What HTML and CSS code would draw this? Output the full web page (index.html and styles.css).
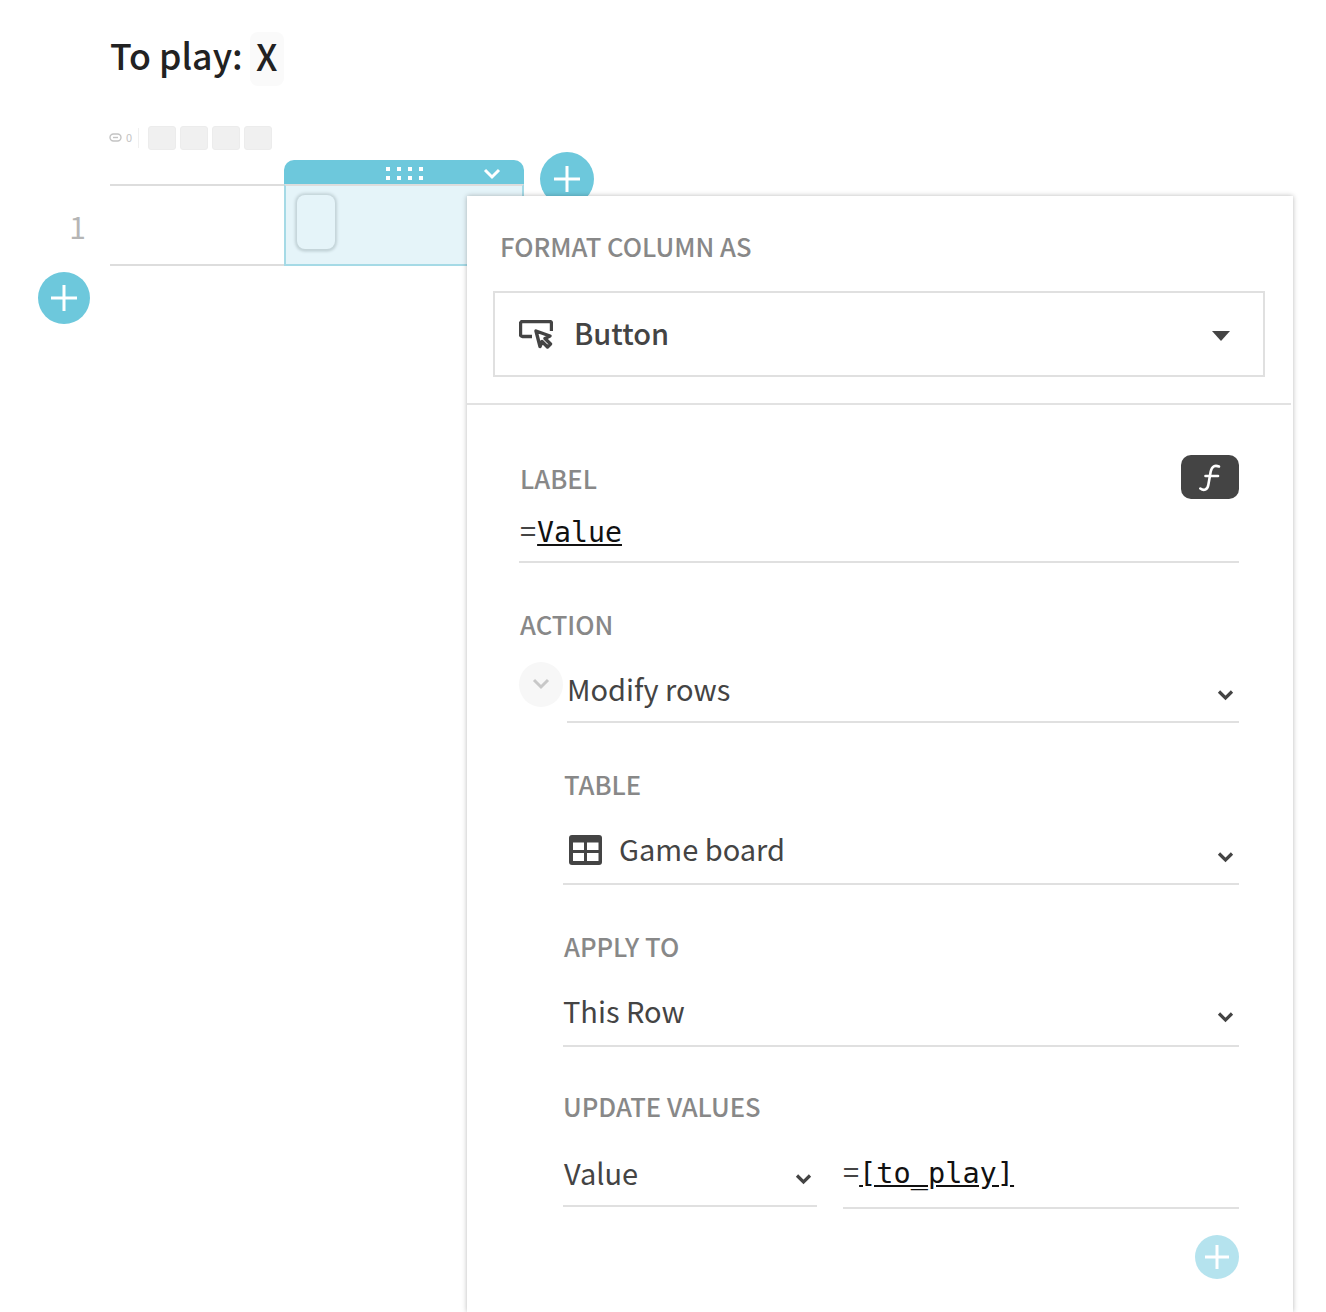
FILE: index.html
```html
<!DOCTYPE html>
<html lang="en">
<head>
    <meta charset="UTF-8">
    <meta name="viewport" content="width=device-width, initial-scale=1.0">
    <title>Format column</title>
    <link rel="stylesheet" href="styles.css">
</head>
<body>
    <header class="title">
        <h1>To play:</h1>
        <span class="title-chip">X</span>
    </header>

    <div class="toolbar">
        <svg class="link-icon" width="13" height="9" viewBox="0 0 13 9"><rect x="1" y="1" width="11" height="7" rx="3.5" fill="none" stroke="#c4c4c4" stroke-width="1.4"/><path d="M4 4.5h5" stroke="#c4c4c4" stroke-width="1.4"/></svg>
        <span class="link-count">0</span>
        <span class="toolbar-sep"></span>
        <span class="swatch"></span>
        <span class="swatch"></span>
        <span class="swatch"></span>
        <span class="swatch"></span>
    </div>

    <div class="sheet">
        <div class="col-head">
            <svg class="col-grip" width="38" height="13" viewBox="0 0 38 13" fill="#fff">
                <rect x="0" y="0" width="4" height="4"/><rect x="11" y="0" width="4" height="4"/><rect x="22" y="0" width="4" height="4"/><rect x="33" y="0" width="4" height="4"/>
                <rect x="0" y="9" width="4" height="4"/><rect x="11" y="9" width="4" height="4"/><rect x="22" y="9" width="4" height="4"/><rect x="33" y="9" width="4" height="4"/>
            </svg>
            <svg class="col-chevron" width="18" height="12" viewBox="0 0 18 12"><path d="M2 2l7 7 7-7" fill="none" stroke="#fff" stroke-width="3"/></svg>
        </div>
        <button class="round-add add-col"><svg width="30" height="30" viewBox="0 0 30 30"><path d="M15 2v26M2 15h26" stroke="#fff" stroke-width="3"/></svg></button>
        <div class="row-num">1</div>
        <div class="cell"></div>
        <div class="cell cell-selected"><span class="cell-button"></span></div>
        <button class="round-add add-row"><svg width="28" height="28" viewBox="0 0 28 28"><path d="M14 1v26M1 14h26" stroke="#fff" stroke-width="3"/></svg></button>
    </div>

    <aside class="panel">
        <div class="panel-head">
            <div class="label">FORMAT COLUMN AS</div>
            <div class="type-select">
                <svg class="type-icon" width="34" height="29" viewBox="0 0 34 29" fill="none" stroke="#444" stroke-width="3.4" stroke-linejoin="round">
                    <path d="M13 16.500H3.500a2 2 0 0 1-2-2V3.500a2 2 0 0 1 2-2h27a2 2 0 0 1 2 2V11"/>
                    <path d="M17 11l14 5-5 2.500 5.500 5.500-3 3-5.500-5.500-2 5z"/>
                </svg>
                <span class="type-name">Button</span>
                <span class="caret"></span>
            </div>
        </div>

        <div class="panel-body">
            <div class="label-row">
                <div class="label">LABEL</div>
                <button class="fx-button">
                    <svg width="58" height="44" viewBox="0 0 58 44" fill="none" stroke="#fff" stroke-width="2.6" stroke-linecap="round"><path d="M38 11.500c-4-1.500-7-.5-8.300 5L27.300 30c-.8 5-4.500 6-8 3.500"/><path d="M24.500 21H37"/></svg>
                </button>
            </div>
            <div class="formula label-formula">=<code>Value</code></div>

            <div class="label action-label">ACTION</div>
            <div class="action-row">
                <span class="collapse">
                    <svg width="18" height="12" viewBox="0 0 18 12"><path d="M2 2l7 7 7-7" fill="none" stroke="#c8c8c8" stroke-width="3"/></svg>
                </span>
                <div class="select action-select">
                    <span>Modify rows</span>
                    <svg class="chevron" width="17" height="12" viewBox="0 0 17 12"><path d="M2 2.500l6.500 6.500 6.500-6.500" fill="none" stroke="#444" stroke-width="3.200"/></svg>
                </div>
            </div>

            <div class="action-fields">
                <div class="label table-label">TABLE</div>
                <div class="select">
                    <svg class="table-icon" width="33" height="30" viewBox="0 0 33 30">
                        <rect width="33" height="30" rx="3" fill="#444"/>
                        <rect x="4" y="7.500" width="11" height="7.500" fill="#fff"/><rect x="18" y="7.500" width="11.500" height="7.500" fill="#fff"/>
                        <rect x="4" y="18" width="11" height="8" fill="#fff"/><rect x="18" y="18" width="11.500" height="8" fill="#fff"/>
                    </svg>
                    <span>Game board</span>
                    <svg class="chevron" width="17" height="12" viewBox="0 0 17 12"><path d="M2 2.500l6.500 6.500 6.500-6.500" fill="none" stroke="#444" stroke-width="3.200"/></svg>
                </div>

                <div class="label field-label">APPLY TO</div>
                <div class="select apply-select">
                    <span>This Row</span>
                    <svg class="chevron" width="17" height="12" viewBox="0 0 17 12"><path d="M2 2.500l6.500 6.500 6.500-6.500" fill="none" stroke="#444" stroke-width="3.200"/></svg>
                </div>

                <div class="label update-label">UPDATE VALUES</div>
                <div class="update-row">
                    <div class="select value-select">
                        <span>Value</span>
                        <svg class="chevron" width="17" height="12" viewBox="0 0 17 12"><path d="M2 2.500l6.500 6.500 6.500-6.500" fill="none" stroke="#444" stroke-width="3.200"/></svg>
                    </div>
                    <div class="formula value-formula">=<code>[to_play]</code></div>
                </div>

                <div class="add-value">
                    <button class="round-add small-add"><svg width="26" height="26" viewBox="0 0 26 26"><path d="M13 1v24M1 13h24" stroke="#fff" stroke-width="3"/></svg></button>
                </div>
            </div>
        </div>
    </aside>
</body>
</html>
```

FILE: styles.css
```css
/* Sheet with the column format panel open */
body {
    margin: 0;
    height: 1312px;
    overflow: hidden;
    position: relative;
    background-color: #fff;
    color: #444;
    font-family: "Noto Sans CJK SC", "Noto Sans", sans-serif;
}

button {
    padding: 0;
    border: none;
    cursor: pointer;
}

.title {
    display: flex;
    align-items: center;
    gap: 7px;
    height: 54px;
    padding: 32px 0 0 110px;
    color: #222;
}

h1 {
    margin: 0;
    padding-bottom: 8px;
    font-size: 35.700px;
    font-weight: 500;
    line-height: 46px;
}

.title-chip {
    box-sizing: border-box;
    width: 34px;
    height: 54px;
    padding-bottom: 8px;
    background-color: #fafafa;
    border-radius: 8px;
    font-size: 36px;
    font-weight: 500;
    line-height: 46px;
    text-align: center;
}

.toolbar {
    display: flex;
    align-items: center;
    height: 23px;
    margin-top: 40px;
    padding-left: 109px;
    color: #c4c4c4;
}

.link-count {
    margin: 0 0 2px 4px;
    font-size: 11px;
    line-height: 12px;
}

.toolbar-sep {
    width: 1px;
    height: 20px;
    margin: 0 9px 0 6px;
    background-color: #f0f0f0;
}

.swatch {
    width: 26px;
    height: 22px;
    margin-right: 4px;
    background-color: #f0f0f0;
    border: 1px solid #ececec;
    border-radius: 3px;
}

.sheet {
    display: grid;
    grid-template-columns: 110px 174px 240px 70px;
    grid-template-rows: 24px 82px auto;
    margin-top: 11px;
}

.col-head {
    grid-column: 3;
    grid-row: 1;
    display: flex;
    align-items: center;
    justify-content: center;
    position: relative;
    background-color: #6dc8dc;
    border-radius: 10px 10px 0 0;
}

.col-grip {
    margin: 3px 0 0 2px;
}

.col-chevron {
    position: absolute;
    right: 23px;
    top: 8px;
}

.round-add {
    display: flex;
    align-items: center;
    justify-content: center;
    background-color: #6dc8dc;
    border-radius: 50%;
}

.add-col {
    grid-column: 4;
    grid-row: 1;
    width: 54px;
    height: 54px;
    margin: -8px 0 0 16px;
}

.add-row {
    grid-column: 1;
    grid-row: 3;
    width: 52px;
    height: 52px;
    margin: 6px 0 0 38px;
}

.row-num {
    grid-column: 1;
    grid-row: 2;
    padding: 22px 24px 0 0;
    color: #b5b5b5;
    font-size: 30px;
    line-height: 40px;
    text-align: right;
}

.cell {
    grid-row: 2;
    box-sizing: border-box;
    border-top: 2px solid #ddd;
    border-bottom: 2px solid #ddd;
}

.cell-selected {
    padding: 9px 0 0 11px;
    background-color: #e5f4f9;
    border-left: 2px solid #a5dae6;
    border-right: 2px solid #a5dae6;
    border-bottom-color: #a5dae6;
}

.cell-button {
    display: block;
    width: 38px;
    height: 54px;
    background-color: #e5f4f9;
    border-radius: 8px;
    box-shadow: 0 0 3px 1.5px #c4d4d9, 0 2px 3px #c4d4d9;
}

.panel {
    position: absolute;
    left: 467px;
    top: 196px;
    width: 826px;
    height: 1116px;
    background-color: #fff;
    box-shadow: 0 0 5px rgba(0, 0, 0, 0.28);
}

.panel-head {
    margin-right: 2px;
    padding: 36px 26px 26px 26px;
    border-bottom: 2px solid #e2e2e2;
}

.label {
    box-sizing: border-box;
    height: 32px;
    color: #888;
    font-size: 25.600px;
    font-weight: 500;
    line-height: 28px;
}

.panel-head .label {
    padding-left: 7px;
}

.panel-body .label {
    padding-left: 1px;
}

.update-label.label {
    padding-left: 0;
}

.type-select {
    display: flex;
    align-items: center;
    box-sizing: border-box;
    height: 86px;
    margin-top: 27px;
    padding: 0 33px 0 24px;
    border: 2px solid #e0e0e0;
}

.type-icon {
    margin-top: 1px;
}

.type-name {
    flex: 1;
    margin-left: 21px;
    padding-bottom: 4px;
    font-size: 29px;
    font-weight: 500;
    line-height: 40px;
}

.caret {
    width: 0;
    height: 0;
    margin-top: 4px;
    border-left: 9px solid transparent;
    border-right: 9px solid transparent;
    border-top: 10px solid #444;
}

.panel-body {
    padding: 50px 54px 0 52px;
}

.label-row {
    display: flex;
    justify-content: space-between;
    height: 44px;
}

.label-row .label {
    margin-top: 9px;
}

.fx-button {
    width: 58px;
    height: 44px;
    background-color: #444;
    border-radius: 10px;
}

.formula {
    box-sizing: border-box;
    border-bottom: 2px solid #e0e0e0;
    font-size: 29px;
    line-height: 40px;
}

.formula code {
    color: #111;
    font-family: "DejaVu Sans Mono", monospace;
    font-size: 28.600px;
    text-decoration: underline;
}

.label-formula {
    height: 64px;
    padding: 10px 0 0 1px;
}

.label-formula code {
    margin-left: 1px;
    font-size: 28.200px;
}

.action-label {
    margin-top: 47px;
}

.action-row {
    display: flex;
    gap: 4px;
    margin-top: 20px;
}

.collapse {
    display: flex;
    justify-content: center;
    flex: none;
    width: 44px;
    height: 45px;
    padding-top: 16px;
    box-sizing: border-box;
    background-color: #f7f7f7;
    border-radius: 50%;
}

.select {
    display: flex;
    align-items: center;
    position: relative;
    box-sizing: border-box;
    height: 83px;
    padding-top: 10px;
    border-bottom: 2px solid #e0e0e0;
    font-size: 29px;
    line-height: 40px;
}

.action-select {
    flex: 1;
    height: 61px;
    padding-top: 0;
    padding-bottom: 8px;
}

.chevron {
    position: absolute;
    right: 5px;
    top: 49px;
}

.action-select .chevron {
    top: 27px;
}

.apply-select .chevron {
    top: 47px;
}

.action-fields {
    padding-left: 44px;
}

.table-label {
    margin-top: 47px;
}

.table-icon {
    margin: 4px 17px 0 6px;
}

.field-label {
    margin-top: 47px;
}

.update-label {
    margin-top: 45px;
}

.update-row {
    display: flex;
    gap: 26px;
}

.value-select {
    flex: none;
    width: 254px;
    padding: 14px 0 0 1px;
}

.value-formula {
    flex: 1;
    height: 85px;
    padding-top: 26px;
}

.add-value {
    display: flex;
    justify-content: flex-end;
    margin-top: 26px;
}

.small-add {
    width: 44px;
    height: 44px;
    background-color: #b5e3ee;
}
```
